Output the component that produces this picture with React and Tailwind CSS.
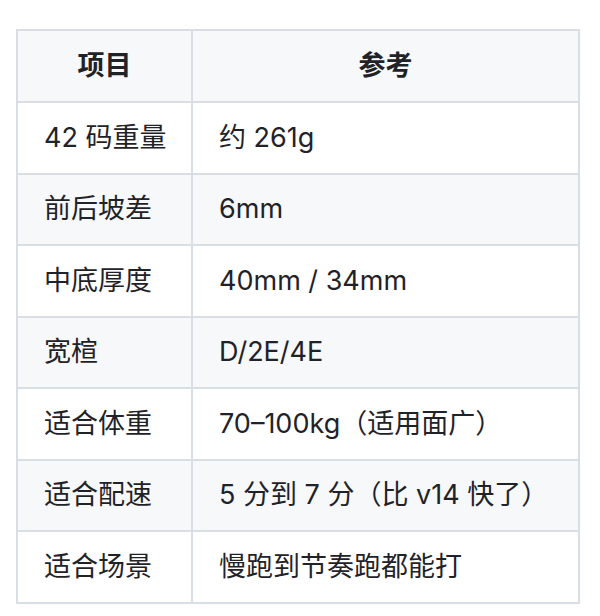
export default function App() {
  const rows = [
    ["42 码重量", "约 261g"],
    ["前后坡差", "6mm"],
    ["中底厚度", "40mm / 34mm"],
    ["宽楦", "D/2E/4E"],
    ["适合体重", "70–100kg（适用面广）"],
    ["适合配速", "5 分到 7 分（比 v14 快了）"],
    ["适合场景", "慢跑到节奏跑都能打"],
  ];
  const font = { fontFamily: 'Inter, "Noto Sans CJK SC", sans-serif' };
  return (
    <div className="w-[600px] h-[616px] bg-white pt-[29px] pl-[16px] text-[#1f2328]" style={font}>
      <div className="w-[564px] border-l-2 border-t-2 border-[#d8dee4] grid grid-cols-[175px_387px]">
        <div className="h-[72px] bg-[#f6f8fa] border-r-2 border-b-2 border-[#d8dee4] flex items-center justify-center text-[27px] font-semibold">项目</div>
        <div className="h-[72px] bg-[#f6f8fa] border-r-2 border-b-2 border-[#d8dee4] flex items-center justify-center text-[27px] font-semibold">参考</div>
        {rows.map(([a, b], i) => {
          const bg = i % 2 === 1 ? "bg-[#f6f8fa]" : "bg-white";
          return [
            <div key={a} className={`h-[71.5px] ${bg} border-r-2 border-b-2 border-[#d8dee4] flex items-center pl-[26px] text-[27px]`}>{a}</div>,
            <div key={b} className={`h-[71.5px] ${bg} border-r-2 border-b-2 border-[#d8dee4] flex items-center pl-[26px] text-[27px]`}>{b}</div>,
          ];
        })}
      </div>
    </div>
  );
}
